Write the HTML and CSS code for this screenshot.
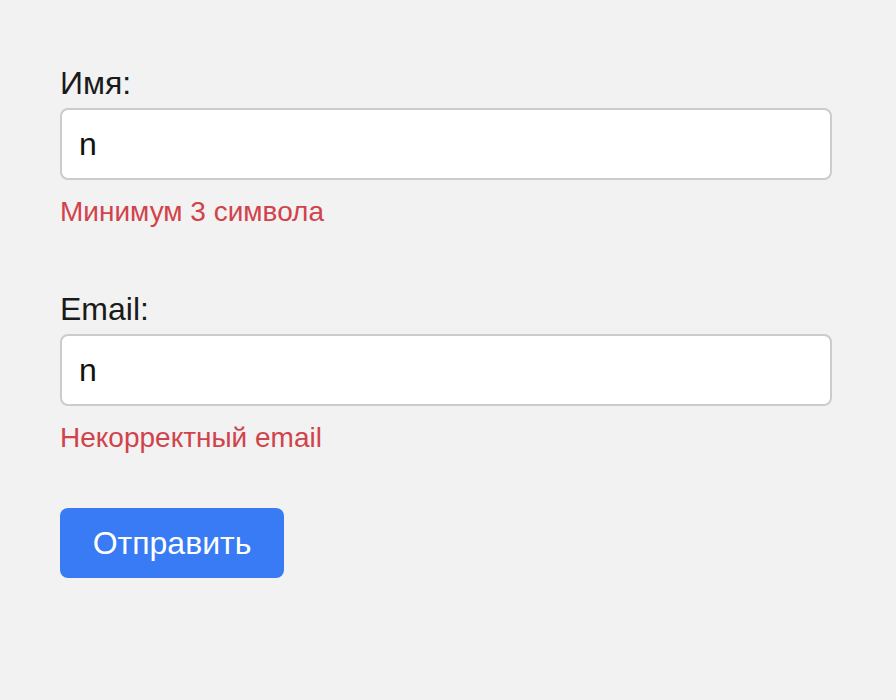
FILE: index.html
```html
<!DOCTYPE html>
<html lang="ru">
<head>
  <meta charset="UTF-8">
  <title>Форма</title>
  <link rel="stylesheet" href="styles.css">
</head>
<body>
  <form class="form" novalidate>
    <div class="field">
      <label for="name">Имя:</label>
      <input id="name" type="text" value="n">
      <p class="error">Минимум 3 символа</p>
    </div>
    <div class="field">
      <label for="email">Email:</label>
      <input id="email" type="text" value="n">
      <p class="error">Некорректный email</p>
    </div>
    <button type="submit">Отправить</button>
  </form>
</body>
</html>
```

FILE: styles.css
```css
body {
  margin: 0;
  padding: 63px 60px;
  background: #f2f2f2;
  font-family: "Liberation Sans", Arial, sans-serif;
  color: #1a1a1a;
}

.form {
  width: 772px;
}

.field {
  margin-bottom: 52px;
}

.field + .field {
  margin-top: 59px;
}

label {
  display: block;
  font-size: 32px;
  line-height: 40px;
  margin-bottom: 5px;
}

input {
  display: block;
  box-sizing: border-box;
  width: 100%;
  height: 72px;
  padding: 0 17px;
  border: 2px solid #cccccc;
  border-radius: 8px;
  background: #fff;
  font-family: inherit;
  font-size: 32px;
  color: #111;
  outline: none;
}

.error {
  margin: 14px 0 0;
  font-size: 28px;
  line-height: 36px;
  color: #d1434b;
}

button {
  display: block;
  width: 224px;
  height: 70px;
  border: none;
  border-radius: 8px;
  background: #387bf5;
  color: #fff;
  font-family: inherit;
  font-size: 32px;
  cursor: pointer;
}
```
